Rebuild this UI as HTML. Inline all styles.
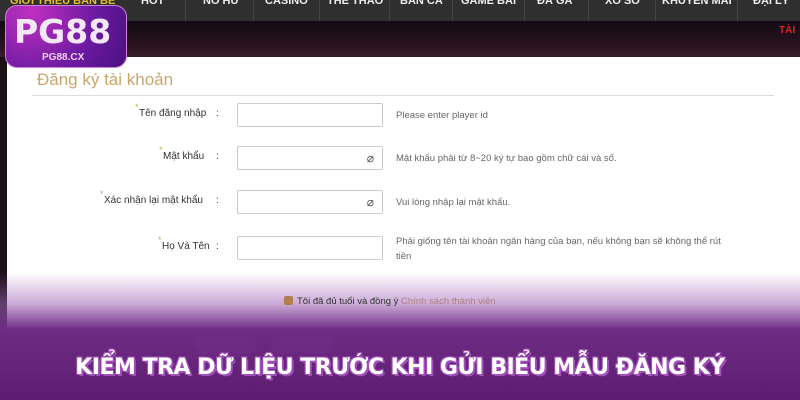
<!DOCTYPE html>
<html><head><meta charset="utf-8"><style>
*{margin:0;padding:0;box-sizing:border-box}
html,body{width:800px;height:400px;overflow:hidden}
body{position:relative;background:#fff;font-family:"Liberation Sans","DejaVu Sans",sans-serif}
.nav{position:absolute;left:0;top:0;width:800px;height:21px;background:#2f2f2f;}
.nav span{position:absolute;top:-5px;font-size:11px;font-weight:bold;color:#eee;white-space:nowrap}
.nav i{position:absolute;top:0;width:1px;height:21px;background:#444}
.band{position:absolute;left:0;top:21px;width:800px;height:36px;background:linear-gradient(#120a12,#2a1420 70%,#3a1c28)}
.left{position:absolute;left:0;top:57px;width:7px;height:343px;background:#1a1018}
.logo{position:absolute;left:5px;top:5px;width:122px;height:63px;border-radius:12px;background:radial-gradient(circle at 20% 10%,#c030c0,#6a1aa0 60%,#4a1080);border:1px solid #d080e0;overflow:hidden}
.logo .a{position:absolute;left:8px;top:6px;font-size:33px;font-weight:bold;color:#f4e8f8;letter-spacing:0px;font-family:"DejaVu Sans",sans-serif}
.logo .b{position:absolute;left:36px;top:46px;font-size:10px;font-weight:bold;color:#f0d0f0}
.title{position:absolute;left:37px;top:70px;font-size:17px;color:#c9a66b}
.hr{position:absolute;left:32px;top:95px;width:742px;height:1px;background:#ddd}
.lab{position:absolute;font-size:10px;color:#333;white-space:nowrap}
.lab b{position:absolute;left:-4px;top:-6px;color:#c9a66b;font-weight:normal;font-size:9px}
.colon{position:absolute;left:216px;font-size:10px;color:#333}
.inp{position:absolute;left:237px;width:146px;height:24px;border:1px solid #ccc;border-radius:2px;background:#fff}
.eye{position:absolute;right:8px;top:4px;font-size:12px;color:#555}
.hint{position:absolute;left:396px;font-size:9.5px;color:#666;line-height:15px}
.ov{position:absolute;left:0;top:272px;width:800px;height:128px;background:linear-gradient(rgba(255,255,255,0),rgba(160,100,180,.55) 25%,#6e2c84 45%,#5e1d70 100%)}
.chk{position:absolute;left:284px;top:296px;font-size:9.5px;color:#333}
.chk em{display:inline-block;width:9px;height:9px;background:#b08050;border-radius:2px;vertical-align:-1px;margin-right:4px}
.chk span{color:#b08080}
.btn{position:absolute;top:336px;width:62px;height:18px;border-radius:8px;background:rgba(120,50,140,.35)}
.big{position:absolute;left:0;top:355px;width:800px;text-align:center;font-size:22px;font-weight:bold;color:#fff;font-family:'DejaVu Sans',sans-serif;letter-spacing:-0.5px;text-shadow:2px 2px 0 #a050b8,-1px -1px 0 #a050b8,1px -1px 0 #a050b8,-1px 1px 0 #a050b8}
</style></head><body>
<div class="nav">
<span style="left:10px;color:#e8c030">GIỚI THIỆU BẠN BÈ</span>
<span style="left:141px">HOT</span><i style="left:185px"></i>
<span style="left:203px">NỔ HŨ</span><i style="left:253px"></i>
<span style="left:265px">CASINO</span><i style="left:319px"></i>
<span style="left:327px">THỂ THAO</span><i style="left:389px"></i>
<span style="left:400px">BẮN CÁ</span><i style="left:452px"></i>
<span style="left:461px">GAME BÀI</span><i style="left:524px"></i>
<span style="left:537px">ĐÁ GÀ</span><i style="left:588px"></i>
<span style="left:605px">XỔ SỐ</span><i style="left:655px"></i>
<span style="left:662px">KHUYẾN MÃI</span><i style="left:737px"></i>
<span style="left:753px">ĐẠI LÝ</span>
</div>
<div class="band"><span style="position:absolute;left:779px;top:4px;color:#e02020;font-size:10px;font-weight:bold">TÀI</span></div>
<div class="left"></div>
<div class="title">Đăng ký tài khoản</div>
<div class="hr"></div>

<div class="lab" style="left:139px;top:108px"><b>*</b>Tên đăng nhập</div><div class="colon" style="top:108px">:</div>
<div class="inp" style="top:103px"></div><div class="hint" style="top:108px">Please enter player id</div>

<div class="lab" style="left:163px;top:151px"><b>*</b>Mật khẩu</div><div class="colon" style="top:151px">:</div>
<div class="inp" style="top:146px"><span class="eye">⌀</span></div><div class="hint" style="top:151px">Mật khẩu phải từ 8~20 ký tự bao gồm chữ cái và số.</div>

<div class="lab" style="left:104px;top:195px"><b>*</b>Xác nhận lại mật khẩu</div><div class="colon" style="top:195px">:</div>
<div class="inp" style="top:190px"><span class="eye">⌀</span></div><div class="hint" style="top:195px">Vui lòng nhập lại mật khẩu.</div>

<div class="lab" style="left:162px;top:241px"><b>*</b>Họ Và Tên</div><div class="colon" style="top:241px">:</div>
<div class="inp" style="top:236px"></div><div class="hint" style="top:234px">Phải giống tên tài khoản ngân hàng của bạn, nếu không bạn sẽ không thể rút<br>tiền</div>

<div class="ov"></div>
<div class="chk"><em></em>Tôi đã đủ tuổi và đồng ý <span>Chính sách thành viên</span></div>
<div class="btn" style="left:195px"></div><div class="btn" style="left:270px"></div>
<div class="big">KIỂM TRA DỮ LIỆU TRƯỚC KHI GỬI BIỂU MẪU ĐĂNG KÝ</div>

<div class="logo"><div class="a">PG88</div><div class="b">PG88.CX</div></div>
</body></html>
